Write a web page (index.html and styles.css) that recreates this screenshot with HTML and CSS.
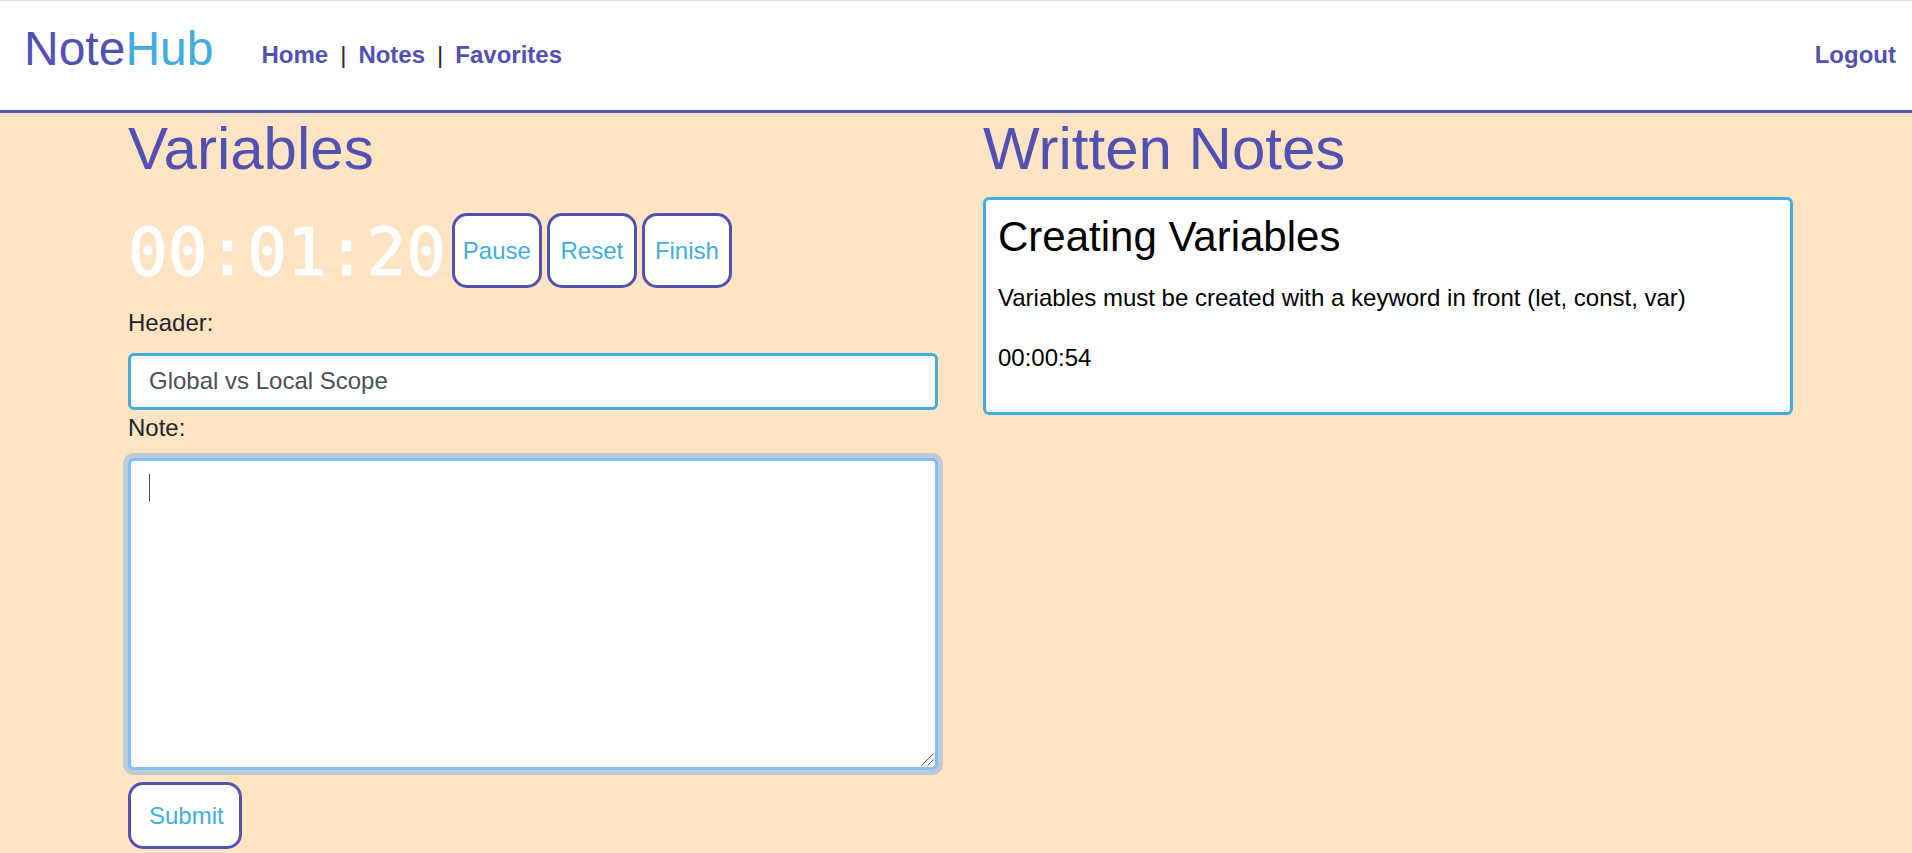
FILE: index.html
```html
<!DOCTYPE html>
<html lang="en">
<head>
<meta charset="utf-8">
<meta name="viewport" content="width=device-width, initial-scale=1">
<title>NoteHub</title>
<link rel="stylesheet" href="styles.css">
</head>
<body>
<header class="navbar">
  <a class="brand" href="#">Note<span class="brand-accent">Hub</span></a>
  <nav class="nav-links">
    <a href="#">Home</a>
    <span>|</span>
    <a href="#">Notes</a>
    <span>|</span>
    <a href="#">Favorites</a>
  </nav>
  <a class="logout" href="#">Logout</a>
</header>
<main class="container">
  <section>
    <h1>Variables</h1>
    <div class="timer">
      <span class="clock">00:01:20</span>
      <button class="btn" type="button">Pause</button>
      <button class="btn" type="button">Reset</button>
      <button class="btn" type="button">Finish</button>
    </div>
    <form>
      <label for="header">Header:</label>
      <input class="field" id="header" type="text" value="Global vs Local Scope">
      <label for="note">Note:</label>
      <div class="note-wrap">
        <textarea class="field note-field" id="note" autofocus></textarea>
        <span class="caret"></span>
        <svg class="grip" width="13" height="13" viewBox="0 0 13 13" aria-hidden="true">
          <path d="M0.5 12.5L12.5 0.5M6.5 12.5L12.5 6.5"/>
        </svg>
      </div>
      <button class="btn submit" type="submit">Submit</button>
    </form>
  </section>
  <section>
    <h1>Written Notes</h1>
    <article class="card">
      <h3>Creating Variables</h3>
      <p>Variables must be created with a keyword in front (let, const, var)</p>
      <p>00:00:54</p>
    </article>
  </section>
</main>
</body>
</html>
```

FILE: styles.css
```css
* {
  box-sizing: border-box;
}

body {
  margin: 0;
  background: #ffe4c4;
  color: #212529;
  font: 24px/36px Arial, "Liberation Sans", sans-serif;
}

.navbar {
  display: flex;
  align-items: center;
  padding: 12px 16px 25px 24px;
  background: #fff;
  border-top: 1px solid #dedede;
  border-bottom: 3px solid #5151b3;
}

.navbar a {
  color: #5151b3;
  font-weight: bold;
  text-decoration: none;
}

.navbar .brand {
  margin-right: 48px;
  font-size: 48px;
  font-weight: normal;
  line-height: 72px;
}

.brand-accent {
  color: #41addf;
}

.nav-links,
.logout {
  padding-top: 12px;
}

.nav-links {
  display: flex;
  gap: 12px;
}

.navbar .logout {
  margin-left: auto;
}

.container {
  display: grid;
  grid-template-columns: 1fr 1fr;
  gap: 45px;
  padding: 0 119px 0 128px;
}

h1 {
  margin: 0 0 12px;
  color: #5151b3;
  font-size: 60px;
  font-weight: normal;
  line-height: 72px;
}

.timer {
  display: flex;
  align-items: center;
  gap: 5px;
  padding: 16px 0 17px;
}

.clock {
  margin-right: 1px;
  padding-top: 5px;
  color: #fff;
  font: 66px/70px "DejaVu Sans Mono", monospace;
  -webkit-text-stroke: 1px #fff;
}

.btn {
  width: 90px;
  height: 75px;
  padding: 0;
  background: #fff;
  border: 3px solid #5151b3;
  border-radius: 15px;
  color: #41addf;
  font: inherit;
}

label {
  display: block;
  margin-bottom: 12px;
}

.field {
  display: block;
  width: 100%;
  height: 57px;
  padding: 8px 18px 10px;
  background: #fff;
  border: 3px solid #41addf;
  border-radius: 6px;
  color: #495057;
  font: inherit;
}

.note-wrap {
  position: relative;
  margin-bottom: 12px;
}

.note-field {
  height: 312px;
  caret-color: transparent;
  resize: none;
}

.field:focus {
  border-color: #80bdff;
  box-shadow: 0 0 0 5px rgba(0, 123, 255, 0.25);
  outline: 0;
}

.caret {
  position: absolute;
  top: 16px;
  left: 21px;
  width: 1px;
  height: 27px;
  background: #495057;
  pointer-events: none;
}

.note-wrap:not(:focus-within) .caret {
  display: none;
}

.grip {
  position: absolute;
  right: 4px;
  bottom: 4px;
  fill: none;
  stroke: #555;
  stroke-width: 1;
  pointer-events: none;
}

.submit {
  width: auto;
  height: 67px;
  padding: 0 15px 0 18px;
}

.card {
  padding: 12px;
  background: #fff;
  border: 3px solid #41addf;
  border-radius: 6px;
  color: #000;
}

.card h3 {
  margin: 0 0 18px;
  font-size: 42px;
  font-weight: normal;
  line-height: 50px;
}

.card p {
  margin: 0 0 24px;
}
```
